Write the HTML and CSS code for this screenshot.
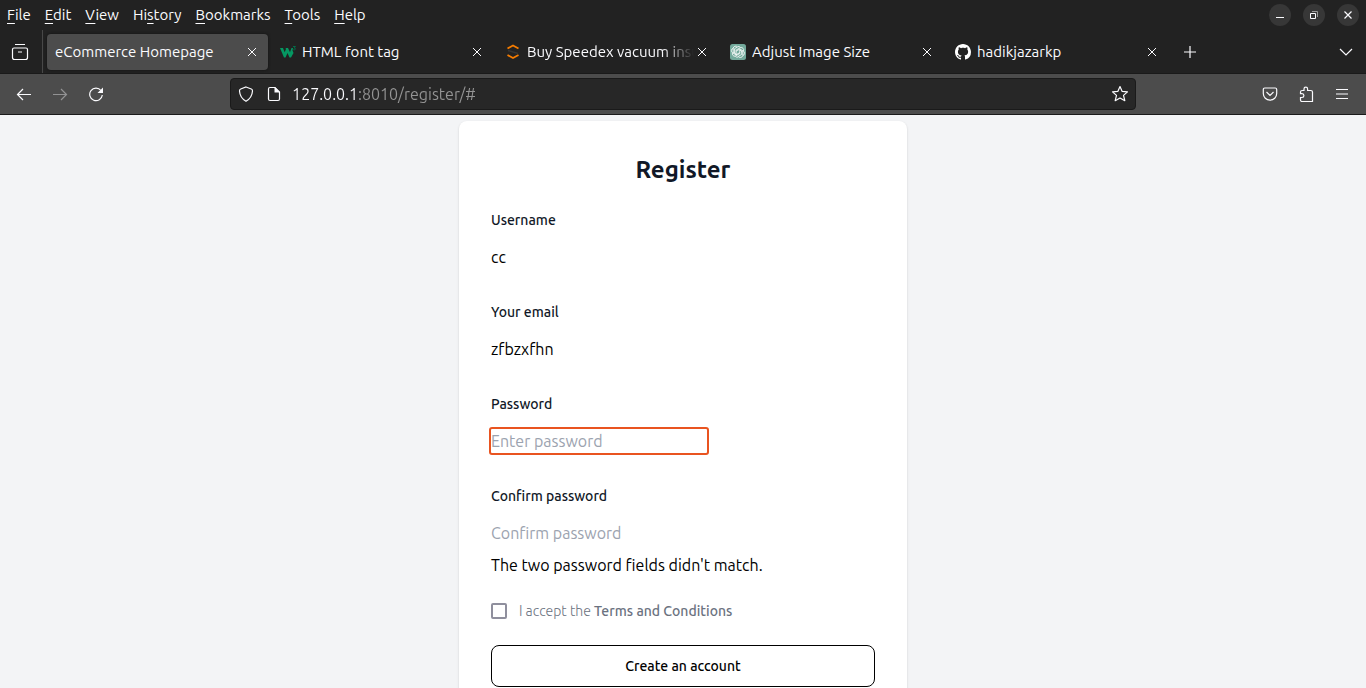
FILE: index.html
```html
<!DOCTYPE html>
<html lang="en">
<head>
<meta charset="utf-8">
<meta name="viewport" content="width=device-width, initial-scale=1">
<title>eCommerce Homepage</title>
<link rel="stylesheet" href="styles.css">
</head>
<body>
<header class="chrome">
  <div class="menubar">
    <nav class="menus" aria-label="Menu bar">
      <button class="menu"><u>F</u>ile</button>
      <button class="menu"><u>E</u>dit</button>
      <button class="menu"><u>V</u>iew</button>
      <button class="menu">Hi<u>s</u>tory</button>
      <button class="menu"><u>B</u>ookmarks</button>
      <button class="menu"><u>T</u>ools</button>
      <button class="menu"><u>H</u>elp</button>
    </nav>
    <div class="window-controls">
      <button class="window-button" aria-label="Minimize"><svg width="22" height="22" viewBox="0 0 22 22"><path d="M7 13.500h8"/></svg></button>
      <button class="window-button" aria-label="Restore"><svg width="22" height="22" viewBox="0 0 22 22"><path d="M7.500 9.500h5v5h-5z"/><path class="dim" d="M9 7.500h5.500V13"/></svg></button>
      <button class="window-button" aria-label="Close"><svg width="22" height="22" viewBox="0 0 22 22"><path class="thick" d="M7.500 7.500l7 7m0-7l-7 7"/></svg></button>
    </div>
  </div>
  <div class="tabbar">
    <button class="tab-overview" aria-label="View"><svg width="18" height="18" viewBox="0 0 18 18"><path class="thick" d="M4 1.500h10M3 5h12q1.500 0 1.500 1.500v8q0 2-2 2h-11q-2 0-2-2v-8Q1.500 5 3 5zM7 9h4"/></svg></button>
    <div class="tabs">
      <div class="tab active"><span class="tab-title">eCommerce Homepage</span><button class="close" aria-label="Close tab"><svg width="16" height="16" viewBox="0 0 16 16"><path d="M4 4l8 8m0-8l-8 8"/></svg></button></div>
      <div class="tab"><svg class="favicon" width="16" height="16" viewBox="0 0 16 16"><path fill="#059862" d="M0 4h3l1.700 4.300L6 5l-.5-1H8l2 4.300L11.500 4H13l-.5 2.500 1 2.500L11 13.500H9.500L7.500 9l-2 4.500H4z"/><path stroke="#056b49" d="M13 2.500h2.500L14.200 4c2 0 1.500 2.500-.9 1.700"/></svg><span class="tab-title">HTML font tag</span><button class="close" aria-label="Close tab"><svg width="16" height="16" viewBox="0 0 16 16"><path d="M4 4l8 8m0-8l-8 8"/></svg></button></div>
      <div class="tab"><svg class="favicon" width="16" height="16" viewBox="0 0 16 16"><path stroke="#f57c00" stroke-width="1.800" d="M2.500 4.500L8 1.500l5.500 3M2.500 11L8 14l5.500-3"/><path stroke="#353535" stroke-width="1.500" d="M3 6.500l10 3"/></svg><span class="tab-title faded">Buy Speedex vacuum insu</span><button class="close" aria-label="Close tab"><svg width="16" height="16" viewBox="0 0 16 16"><path d="M4 4l8 8m0-8l-8 8"/></svg></button></div>
      <div class="tab"><svg class="favicon" width="16" height="16" viewBox="0 0 16 16"><rect width="16" height="16" rx="2.500" fill="#74aa9c"/><g stroke="#fff" stroke-width=".8"><path d="M7.900 2.500a2.400 2.400 0 0 1 2.500 1.100l-4.300 2.500v4.100M10.400 3.600a2.500 2.500 0 0 1 3 3.500L9.800 5 6.200 7.100M13.400 7.100a2.500 2.500 0 0 1-.6 4.500V7.800L9.200 5.700M12.800 11.600a2.500 2.500 0 0 1-4.500.8l3.400-2V6.900M8.300 13a2.500 2.500 0 0 1-3-.9L9.800 9.500V5.900M5.300 12.200a2.500 2.500 0 0 1-2.800-3.400l3.500 2 3.700-2.100M2.500 8.800a2.500 2.500 0 0 1 .7-4.500v4l3.500 2.100M3.200 4.300a2.500 2.500 0 0 1 4.300-1.400L4.600 4.700V9"/></g></svg><span class="tab-title">Adjust Image Size</span><button class="close" aria-label="Close tab"><svg width="16" height="16" viewBox="0 0 16 16"><path d="M4 4l8 8m0-8l-8 8"/></svg></button></div>
      <div class="tab"><svg class="favicon" width="16" height="16" viewBox="0 0 16 16"><path fill="#fff" d="M8 0C3.580 0 0 3.580 0 8c0 3.540 2.290 6.530 5.470 7.590.4.070.55-.17.55-.38 0-.19-.01-.82-.01-1.490-2.010.37-2.530-.49-2.690-.94-.09-.23-.48-.94-.82-1.130-.28-.15-.68-.52-.01-.53.63-.01 1.080.58 1.230.82.72 1.210 1.870.87 2.330.66.07-.52.28-.87.51-1.070-1.780-.2-3.640-.89-3.640-3.950 0-.87.31-1.590.82-2.150-.08-.2-.36-1.020.08-2.120 0 0 .67-.21 2.200.82.64-.18 1.320-.27 2-.27s1.360.09 2 .27c1.530-1.040 2.200-.82 2.200-.82.44 1.100.16 1.920.08 2.120.51.56.82 1.270.82 2.150 0 3.070-1.870 3.750-3.650 3.950.29.25.54.73.54 1.480 0 1.070-.01 1.930-.01 2.200 0 .21.15.46.55.38A8 8 0 0 0 16 8c0-4.420-3.580-8-8-8z"/></svg><span class="tab-title">hadikjazarkp</span><button class="close" aria-label="Close tab"><svg width="16" height="16" viewBox="0 0 16 16"><path d="M4 4l8 8m0-8l-8 8"/></svg></button></div>
    </div>
    <button class="tool new-tab" aria-label="New tab"><svg width="16" height="16" viewBox="0 0 16 16"><path class="thick" d="M8 2v12M2 8h12"/></svg></button>
    <button class="tool tab-list" aria-label="List all tabs"><svg width="16" height="16" viewBox="0 0 16 16"><path class="thick" d="M2 5l6 6 6-6"/></svg></button>
  </div>
  <div class="navbar">
    <button class="tool" aria-label="Back"><svg width="16" height="16" viewBox="0 0 16 16"><path class="thick" d="M15 8.500H1.500M7 3L1.500 8.500 7 14"/></svg></button>
    <button class="tool" aria-label="Forward" disabled><svg width="16" height="16" viewBox="0 0 16 16"><path class="thick" d="M1 8.500h13.500M9 3l5.500 5.500L9 14"/></svg></button>
    <button class="tool" aria-label="Reload"><svg width="16" height="16" viewBox="0 0 16 16"><path class="thick" d="M13 4.500A6.300 6.300 0 1 0 14.300 9"/><path class="solid" d="M15 1.500V7H9.500z"/></svg></button>
    <div class="urlbar">
      <svg width="16" height="16" viewBox="0 0 16 16"><path class="thick" d="M8 1l5.300 2q1.300.5 1.200 2C14.200 9.500 12 13 8 15.200 4 13 1.800 9.500 1.500 5q-.1-1.500 1.200-2z"/></svg>
      <svg width="16" height="16" viewBox="0 0 16 16"><path class="thick" d="M4 1.500h5l4.500 4.500v7q0 1.500-1.500 1.500H4q-1.500 0-1.500-1.500V3Q2.500 1.500 4 1.500z"/><path class="solid" d="M8.500 1.500h1L13.500 6v.5h-5z"/></svg>
      <input class="url" type="text" aria-label="Address" value="127.0.0.1:8010/register/#">
      <button class="star" aria-label="Bookmark this page"><svg width="18" height="18" viewBox="0 0 18 18"><path class="thick" stroke-linejoin="round" d="M9 1.500l2.200 4.900 5.300.5-4 3.500 1.300 5.300L9 13l-4.800 2.700 1.300-5.300-4-3.500 5.300-.5z"/></svg></button>
    </div>
    <button class="tool" aria-label="Save to Pocket"><svg width="16" height="16" viewBox="0 0 16 16"><path class="thick" d="M2.800 2h10.400q1.500 0 1.500 1.500v4a6.700 6.700 0 0 1-13.400 0v-4Q1.300 2 2.800 2zM4.500 6L8 9.500 11.500 6"/></svg></button>
    <button class="tool" aria-label="Extensions"><svg width="16" height="16" viewBox="0 0 16 16"><path class="thick" d="M6 4.500V3a1.800 1.800 0 0 1 3.600 0v1.500h3.200q1.700 0 1.700 1.500v9.500H4q-1.500 0-1.500-1.500v-2.500H4a1.900 1.900 0 0 0 0-3.800H2.500V6q0-1.500 1.500-1.500z"/></svg></button>
    <button class="tool" aria-label="Application menu"><svg width="16" height="16" viewBox="0 0 16 16"><path d="M2 3.500h12M2 8h12M2 12.500h12"/></svg></button>
  </div>
</header>
<main class="page">
  <form class="card">
    <h1 class="title">Register</h1>
    <div class="field"><label for="username">Username</label><input id="username" type="text" value="cc"></div>
    <div class="field"><label for="email">Your email</label><input id="email" type="text" value="zfbzxfhn"></div>
    <div class="field"><label for="password">Password</label><input id="password" class="focused" type="password" placeholder="Enter password"></div>
    <div class="field last"><label for="confirm">Confirm password</label><input id="confirm" type="password" placeholder="Confirm password"></div>
    <p class="error">The two password fields didn't match.</p>
    <div class="terms"><input id="terms" type="checkbox"><label for="terms">I accept the <a href="#">Terms and Conditions</a></label></div>
    <button class="submit" type="submit">Create an account</button>
  </form>
</main>
</body>
</html>
```
FILE: styles.css
```css
* { box-sizing: border-box; }
body {
  margin: 0;
  height: 100vh;
  display: flex;
  flex-direction: column;
  font-family: Ubuntu, "Noto Sans", sans-serif;
  background: #f3f4f6;
}
button, input { font: inherit; color: inherit; margin: 0; padding: 0; border: 0; background: none; }
svg { display: block; flex: none; fill: none; stroke: none; }

/* Browser chrome */
.chrome { flex: none; background: #222; color: #fbfbfe; font-size: 15px; border-bottom: 1px solid #1a1a1a; }
.chrome button svg path, .urlbar path { stroke: #fbfbfe; }
.chrome path.thick { stroke-width: 1.2; }
.chrome path.solid { fill: #fbfbfe; stroke: none; }
.chrome path.dim { stroke: #999; }
.menubar { display: flex; justify-content: space-between; height: 30px; padding: 0 7px; }
.menus { display: flex; gap: 14px; height: 28px; }
.menu u { text-underline-offset: 3px; text-decoration-thickness: 1px; text-decoration-skip-ink: none; }
.window-controls { display: flex; align-items: center; gap: 12px; }
.window-button { height: 22px; border-radius: 50%; background: #373737; }

.tabbar { display: flex; align-items: center; height: 44px; border-bottom: 1px solid #1a1a1a; }
.tab-overview { display: flex; align-items: center; justify-content: center; width: 43px; height: 100%; padding-right: 2px; border-right: 1px solid #484848; }
.tabs { display: flex; flex: 0 1 1125px; min-width: 0; padding-left: 4px; gap: 4px; }
.tab { display: flex; align-items: center; flex: 1 1 0; min-width: 0; height: 36px; padding: 0 8px; border-radius: 4px; }
.tab.active { background: #4c4c4c; box-shadow: 0 0 3px #111; }
.favicon { margin-right: 6px; }
.tab-title { flex: 1; min-width: 0; overflow: hidden; white-space: nowrap; }
.tab-title.faded { mask-image: linear-gradient(to left, transparent, #000 32px); }
.tool { display: flex; align-items: center; justify-content: center; width: 36px; height: 36px; flex: none; }
.tool:disabled { opacity: .4; }
.new-tab { margin-left: 4px; }
.tab-list { margin-left: auto; margin-right: 2px; }

.navbar { display: flex; align-items: center; height: 40px; padding: 0 6px; background: #4c4c4c; }
.urlbar { display: flex; align-items: center; flex: 1; min-width: 0; height: 32px; margin: 0 8.5vw; padding: 0 6px 0 7px; gap: 12px; border: 1px solid #1a1a1a; border-radius: 4px; background: #272727; }
.url { flex: 1; min-width: 0; height: 24px; margin-left: -2px; font-size: 16px; color: transparent; background: linear-gradient(to right, #fbfbfe 65px, #949494 65px); background-clip: text; outline: 0; }

/* Register page */
.page { flex: 1; min-height: 0; overflow-y: auto; scrollbar-width: none; padding: 6px 16px; }
.card { max-width: 448px; margin: 0 auto; padding: 32px; border-radius: 8px; background: #fff; box-shadow: 0 1px 3px rgba(0, 0, 0, .1), 0 1px 2px rgba(0, 0, 0, .06); color: #000; font-size: 16px; line-height: 24px; }
.title { margin: 0 0 24px; font-size: 24px; line-height: 33px; font-weight: 700; text-align: center; color: #111827; }
.field { display: flex; flex-direction: column; align-items: flex-start; gap: 15px; margin-bottom: 33px; }
.field.last { margin-bottom: 8px; }
.field label { font-size: 14px; line-height: 20px; font-weight: 500; color: #111827; }
.field input { width: 216px; height: 24px; outline: 0; }
.field input::placeholder { color: #9ca3af; opacity: 1; }
.field input.focused { outline: 2px solid #e95420; border-radius: 1px; }
.error { margin: 0 0 24px; }
.terms { display: flex; align-items: center; gap: 12px; margin-bottom: 24px; font-size: 14px; line-height: 20px; font-weight: 300; color: #6b7280; }
.terms input { appearance: none; width: 16px; height: 16px; border: 2px solid #8f8f9d; border-radius: 2px; }
.terms a { font-weight: 500; color: inherit; text-decoration: none; }
.submit { display: block; width: 100%; padding: 10px 20px; border: 1px solid #000; border-radius: 8px; font-size: 14px; line-height: 20px; font-weight: 500; }
```
